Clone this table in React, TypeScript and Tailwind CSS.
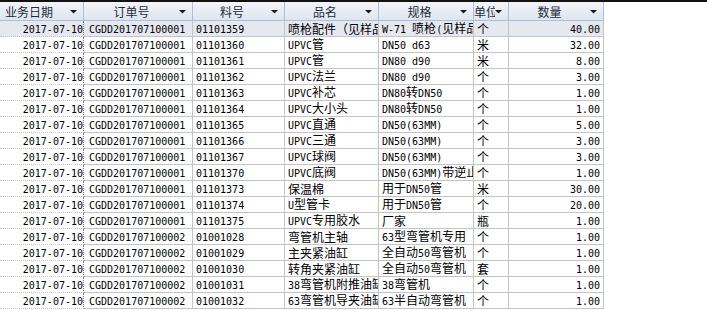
import React from "react";

type Col = { key: string; label: string; w: number };

const cols: Col[] = [
  { key: "date", label: "业务日期", w: 84 },
  { key: "order", label: "订单号", w: 109 },
  { key: "code", label: "料号", w: 92 },
  { key: "name", label: "品名", w: 94 },
  { key: "spec", label: "规格", w: 95 },
  { key: "unit", label: "单位", w: 35 },
  { key: "qty", label: "数量", w: 95 },
];

const rows: string[][] = [
  ["2017-07-10", "CGDD201707100001", "01101359", "喷枪配件（见样品）", "W-71 喷枪(见样品)", "个", "40.00"],
  ["2017-07-10", "CGDD201707100001", "01101360", "UPVC管", "DN50 d63", "米", "32.00"],
  ["2017-07-10", "CGDD201707100001", "01101361", "UPVC管", "DN80 d90", "米", "8.00"],
  ["2017-07-10", "CGDD201707100001", "01101362", "UPVC法兰", "DN80 d90", "个", "3.00"],
  ["2017-07-10", "CGDD201707100001", "01101363", "UPVC补芯", "DN80转DN50", "个", "1.00"],
  ["2017-07-10", "CGDD201707100001", "01101364", "UPVC大小头", "DN80转DN50", "个", "1.00"],
  ["2017-07-10", "CGDD201707100001", "01101365", "UPVC直通", "DN50(63MM)", "个", "5.00"],
  ["2017-07-10", "CGDD201707100001", "01101366", "UPVC三通", "DN50(63MM)", "个", "3.00"],
  ["2017-07-10", "CGDD201707100001", "01101367", "UPVC球阀", "DN50(63MM)", "个", "3.00"],
  ["2017-07-10", "CGDD201707100001", "01101370", "UPVC底阀", "DN50(63MM)带逆止阀", "个", "1.00"],
  ["2017-07-10", "CGDD201707100001", "01101373", "保温棉", "用于DN50管", "米", "30.00"],
  ["2017-07-10", "CGDD201707100001", "01101374", "U型管卡", "用于DN50管", "个", "20.00"],
  ["2017-07-10", "CGDD201707100001", "01101375", "UPVC专用胶水", "厂家", "瓶", "1.00"],
  ["2017-07-10", "CGDD201707100002", "01001028", "弯管机主轴", "63型弯管机专用", "个", "1.00"],
  ["2017-07-10", "CGDD201707100002", "01001029", "主夹紧油缸", "全自动50弯管机", "个", "1.00"],
  ["2017-07-10", "CGDD201707100002", "01001030", "转角夹紧油缸", "全自动50弯管机", "套", "1.00"],
  ["2017-07-10", "CGDD201707100002", "01001031", "38弯管机附推油缸", "38弯管机", "个", "1.00"],
  ["2017-07-10", "CGDD201707100002", "01001032", "63弯管机导夹油缸", "63半自动弯管机", "个", "1.00"],
];

// ascii runs get a narrow mono face so they sit at half the width of the CJK glyphs
function Txt({ s }: { s: string }) {
  const parts = s.split(/([\x20-\x7e]+)/).filter(Boolean);
  return (
    <>
      {parts.map((p, i) =>
        /^[\x20-\x7e]+$/.test(p) ? (
          <span key={i} className="font-['DejaVu_Sans_Mono',monospace] text-[10px] whitespace-pre">
            {p}
          </span>
        ) : (
          <span key={i}>{p}</span>
        )
      )}
    </>
  );
}

function Arrow() {
  return (
    <svg width="7" height="4" viewBox="0 0 7 4" className="shrink-0">
      <polygon points="0,0 7,0 3.5,3.5" fill="#1a1a1a" />
    </svg>
  );
}

export default function App() {
  return (
    <div className="w-[707px] h-[310px] overflow-hidden bg-white font-['Noto_Sans_CJK_SC',sans-serif] text-[12px] text-black leading-none">
      <div className="h-[2px] bg-[#111]" />

      {/* header */}
      <div className="flex h-[19px]">
        {cols.map((c, i) => (
          <div
            key={c.key}
            style={{ width: c.w }}
            className="flex items-center pt-[2px] pr-[6px] bg-gradient-to-b from-[#f3f5f9] to-[#dfe5ee] border-r border-b border-[#a9c1da] text-[#1c2b3a] overflow-hidden"
          >
            <div className={`flex-1 overflow-hidden whitespace-nowrap ${i === 0 ? "pl-[5px]" : "text-center"}`}>
              {c.label}
            </div>
            <Arrow />
          </div>
        ))}
        <div className="flex-1 bg-white" />
      </div>

      {/* body */}
      <div className="flex flex-col">
        {rows.map((r, ri) => (
          <div key={ri} className="flex h-[16px]">
            {cols.map((c, ci) => (
              <div
                key={c.key}
                style={{ width: c.w }}
                className={`flex items-center overflow-hidden whitespace-nowrap border-b border-[#c4c4c4] ${
                  ci === 0 ? "justify-end border-r border-r-[#7a7a7a] border-dotted" : "border-r"
                } ${ci === 6 ? "justify-end pr-[3px]" : ""} ${ci === 1 ? "pl-[5px]" : ""} ${
                  ci > 1 && ci < 6 ? "pl-[3px]" : ""
                } ${ri === 0 ? "bg-[#e6e8f0]" : "bg-white"}`}
              >
                <span className="whitespace-nowrap">
                  <Txt s={r[ci]} />
                </span>
              </div>
            ))}
            <div className="flex-1 bg-white" />
          </div>
        ))}
      </div>
    </div>
  );
}
